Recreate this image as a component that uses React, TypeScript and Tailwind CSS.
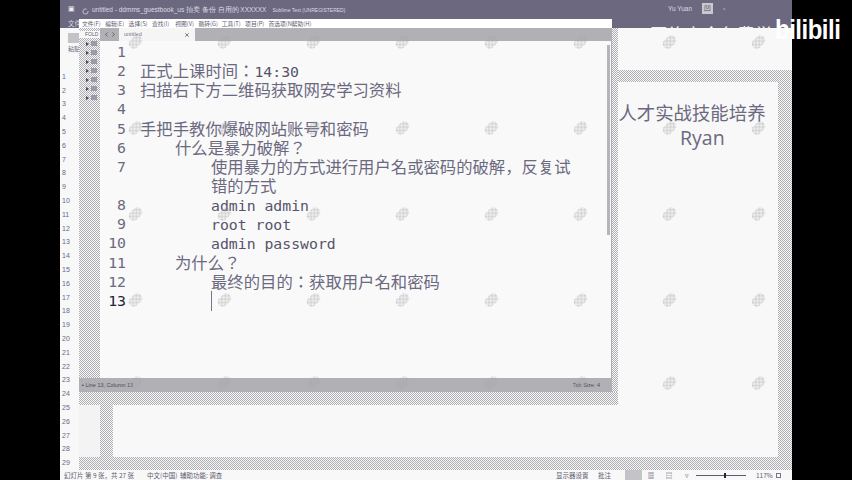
import { ChevronLeft, ChevronRight, LoaderCircle, X } from "lucide-react";

const DITHER = "bg-[conic-gradient(#aeaeb2_25%,#f8f8f8_0_50%,#aeaeb2_0_75%,#f8f8f8_0)] bg-[length:2px_2px]";
const MONO = "font-['DejaVu_Sans_Mono',monospace] text-[14.8px]";

const menus = ["文件(F)", "编辑(E)", "选择(S)", "查找(I)", "视图(V)", "跳转(G)", "工具(T)", "项目(P)", "首选项(N)", "帮助(H)"];

type Line = { n: number; indent?: string; text?: string; mono?: string; more?: string };

const lines: Line[] = [
  { n: 1 },
  { n: 2, text: "正式上课时间：", mono: "14:30" },
  { n: 3, text: "扫描右下方二维码获取网安学习资料" },
  { n: 4 },
  { n: 5, text: "手把手教你爆破网站账号和密码" },
  { n: 6, indent: "pl-[35px]", text: "什么是暴力破解？" },
  { n: 7, indent: "pl-[71px]", text: "使用暴力的方式进行用户名或密码的破解，反复试", more: "错的方式" },
  { n: 8, indent: "pl-[71px]", mono: "admin admin" },
  { n: 9, indent: "pl-[71px]", mono: "root root" },
  { n: 10, indent: "pl-[71px]", mono: "admin password" },
  { n: 11, indent: "pl-[35px]", text: "为什么？" },
  { n: 12, indent: "pl-[71px]", text: "最终的目的：获取用户名和密码" },
  { n: 13, indent: "pl-[71px]" },
];

const markX = [135, 224, 313, 402, 491, 580, 669, 758];
const markY = [42, 128, 214, 300, 383];

function Editor() {
  return (
    <div className="flex-1 bg-[#f9f9f9] pt-[1px] text-[16.35px] text-[#6b6980] font-['Noto_Sans_CJK_JP',sans-serif]">
      {lines.map((l) => (
        <div key={l.n} className="flex">
          <div className={`w-[26px] h-[19.15px] leading-[19.15px] text-right shrink-0 ${MONO} ${l.n === 13 ? "text-[#26243a]" : "text-[#6b6980]"}`}>
            {l.n}
          </div>
          <div className={`ml-[14px] flex-1 leading-[19.15px] min-h-[19.15px] whitespace-nowrap ${l.indent ?? ""}`}>
            <div className="h-[19.15px] relative">
              {l.text}
              {l.mono && <span className={`${MONO} text-[#56546a]`}>{l.mono}</span>}
              {l.n === 13 && <span className="inline-block w-px h-[20px] bg-[#77758a]" />}
            </div>
            {l.more && <div className="h-[19.15px]">{l.more}</div>}
          </div>
        </div>
      ))}
    </div>
  );
}

function SublimeWindow() {
  return (
    <div className="absolute left-[19px] top-[19px] w-[539px] h-[386px] flex flex-col">
      <div className="h-[373px] flex">
        <div className="w-[533px] h-[373px] flex flex-col">
          <div className="h-[9px] bg-white flex items-center pl-[3px] text-[5.8px] leading-none text-[#5d5b70] font-['Noto_Sans_CJK_SC',sans-serif]">
            {menus.map((m) => (
              <span key={m} className="w-[23.3px] shrink-0 whitespace-nowrap">{m}</span>
            ))}
          </div>
          <div className="flex-1 flex min-h-0">
            <div className={`w-[21px] flex flex-col pt-[3px] gap-[2px] ${DITHER}`}>
              <div className="h-[7px] text-[5px] leading-[7px] pl-[6px] text-[#5d5b70] font-['Liberation_Sans',sans-serif] bg-[#f8f8f8]">FOLD</div>
              {[0, 1, 2, 3, 4, 5, 6].map((i) => (
                <div key={i} className="h-[7px] flex items-center gap-[2px] pl-[7px]">
                  <span className="w-0 h-0 border-y-[2px] border-l-[3px] border-y-transparent border-l-[#4a4860]" />
                  <span className="w-[6px] h-[5px] bg-[#9c9aa8]" />
                </div>
              ))}
            </div>
            <div className="flex-1 flex flex-col min-w-0">
              <div className="h-[13px] bg-[#b1b1b5] flex items-stretch">
                <div className="w-[19px] flex items-center justify-center text-[#55536a]">
                  <ChevronLeft size={7} strokeWidth={3} />
                  <ChevronRight size={7} strokeWidth={3} />
                </div>
                <div className="w-[76px] bg-[#f5f5f5] flex items-center justify-between px-[5px] text-[5.5px] text-[#77758a] font-['Liberation_Sans',sans-serif]">
                  <span>untitled</span>
                  <X size={6} strokeWidth={3} className="text-[#55536a]" />
                </div>
              </div>
              <div className="flex-1 flex min-h-0">
                <Editor />
                <div className="w-[5px] bg-[#f9f9f9] border-r border-[#aeaeb2] pt-[4px]">
                  <div className="w-[3px] h-[190px] bg-[#b5b5b9]" />
                </div>
              </div>
            </div>
          </div>
          <div className="h-[14px] bg-[#b1b1b5] flex items-center justify-between pl-[3px] pr-[12px] text-[5.5px] text-[#4a4860] font-['Liberation_Sans',sans-serif]">
            <span>▪ Line 13, Column 13</span>
            <span>Tab Size: 4</span>
          </div>
        </div>
        <div className={`w-[6px] mt-[9px] ${DITHER}`} />
      </div>
      <div className={`h-[13px] ${DITHER}`} />
    </div>
  );
}

function StatusBar() {
  return (
    <div className="h-[10px] bg-[#f8f8f8] flex items-center px-[4px] text-[6.5px] leading-none text-[#5d5b70] whitespace-nowrap font-['Noto_Sans_CJK_SC',sans-serif]">
      <span className="w-[83px]">幻灯片 第 9 张，共 27 张</span>
      <span className="w-[33px]">中文(中国)</span>
      <span className="w-[376px]">辅助功能: 调查</span>
      <span className="w-[42px]">显示器设置</span>
      <span className="w-[27px]">批注</span>
      <span className="w-[17px] h-[10px] bg-[#c4c4c8]" />
      <span className="w-[18px] text-center">▦</span>
      <span className="w-[18px] text-center">▤</span>
      <span className="w-[18px] text-center">▿</span>
      <div className="w-[50px] h-px bg-[#5d5b70] relative">
        <span className="absolute left-[28px] -top-[2px] w-[2px] h-[5px] bg-[#26243a]" />
      </div>
      <span className="ml-[10px] w-[20px]">117%</span>
      <span className="w-[5px] h-[5px] border border-[#77758a]" />
    </div>
  );
}

function SlideArea() {
  return (
    <div className="flex-1 min-w-0 flex flex-col min-h-0">
      <div className="h-[42px] bg-[#f8f8f8]" />
      <div className={`flex-1 flex min-h-0 ${DITHER} pt-[12px] pb-[13px] pr-[14px]`}>
        <div className="w-[21px] shrink-0 bg-[#f3f3f4]" />
        <div className="w-[13px] shrink-0" />
        <div className="flex-1 min-w-0 bg-[#f8f8f8] pl-[487px] pt-[21px] text-[#6b6880] leading-none font-['Noto_Sans_CJK_SC',sans-serif]">
          <div className="text-[18.4px] whitespace-nowrap">安人才实战技能培养</div>
          <div className="text-[19.5px] mt-[7px] pl-[80px] font-['Open_Sans',sans-serif]">Ryan</div>
        </div>
      </div>
    </div>
  );
}

export default function App() {
  return (
    <div className="w-[852px] h-[480px] bg-black flex overflow-hidden relative">
      <div className="w-[60px] shrink-0" />
      <div className="w-[732px] shrink-0 relative flex flex-col">
        <div className="h-[28px] bg-[#6b6880] relative overflow-hidden shrink-0">
          <div className="absolute left-[8px] top-[4px] text-[7px] text-[#f0f0f0]">▣</div>
          <LoaderCircle size={7} className="absolute left-[22px] top-[8px] text-white" />
          <div className="absolute left-[8px] top-[19px] text-[6.5px] text-[#d8d8de] font-['Noto_Sans_CJK_SC',sans-serif]">文件</div>
          <div className="absolute left-[32px] top-[5px] flex gap-[6px] items-center leading-[10px] whitespace-nowrap text-[#dcdce2] font-['Liberation_Sans',sans-serif]">
            <span className="text-[6.5px]">untitled - ddmms_guestbook_us 拍卖 备份 自用的 XXXXXX</span>
            <span className="text-[5px]">Sublime Text (UNREGISTERED)</span>
          </div>
          <div className="absolute left-[608px] top-[3px] flex items-center gap-[10px] text-[6.5px] text-[#dcdce2] font-['Liberation_Sans',sans-serif]">
            <span>Yu Yuan</span>
            <span className="w-[11px] h-[11px] bg-[#c8c8ce] text-center text-[7px] leading-[11px] text-[#4a4860]">凹</span>
            <span>▫</span>
          </div>
          <div className="absolute left-[590px] top-[25px] text-[17.5px] leading-none whitespace-nowrap text-[#f0f0f2] font-['Noto_Sans_CJK_SC',sans-serif]">
            网络安全免费学
          </div>
        </div>
        <div className="flex-1 flex min-h-0">
          <div className="w-[19px] shrink-0 bg-[#f8f8f8] pt-[5px] flex flex-col text-[7px] text-[#6b6980] font-['Liberation_Sans',sans-serif]">
            <div className="ml-[8px] h-[11px] bg-[#c4c4c8]" />
            <div className="h-[29px] pt-[3px] pl-[8px] text-[6px] leading-none whitespace-nowrap font-['Noto_Sans_CJK_SC',sans-serif]">粘贴</div>
            {Array.from({ length: 29 }, (_, i) => (
              <div key={i} className="h-[13.8px] leading-[13.8px] pl-[2px]">{i + 1}</div>
            ))}
          </div>
          <SlideArea />
        </div>
        <StatusBar />
        <SublimeWindow />
        {markY.flatMap((y) =>
          markX.map((x) => (
            <div
              key={`${x}-${y}`}
              className="absolute w-[15px] h-[10px] rounded-full -rotate-45 pointer-events-none opacity-60 bg-[conic-gradient(#a9a9ad_25%,transparent_0_50%,#a9a9ad_0_75%,transparent_0)] bg-[length:2px_2px]"
              style={{ left: x - 67, top: y - 5 }}
            />
          ))
        )}
      </div>
      <div className="w-[60px] shrink-0" />
      <div className="absolute left-[775px] top-[16px] origin-top scale-y-[1.15] text-[24px] leading-none text-white font-bold tracking-[-0.5px] font-['Liberation_Sans_Narrow','Liberation_Sans',sans-serif]">
        bilibili
      </div>
    </div>
  );
}
